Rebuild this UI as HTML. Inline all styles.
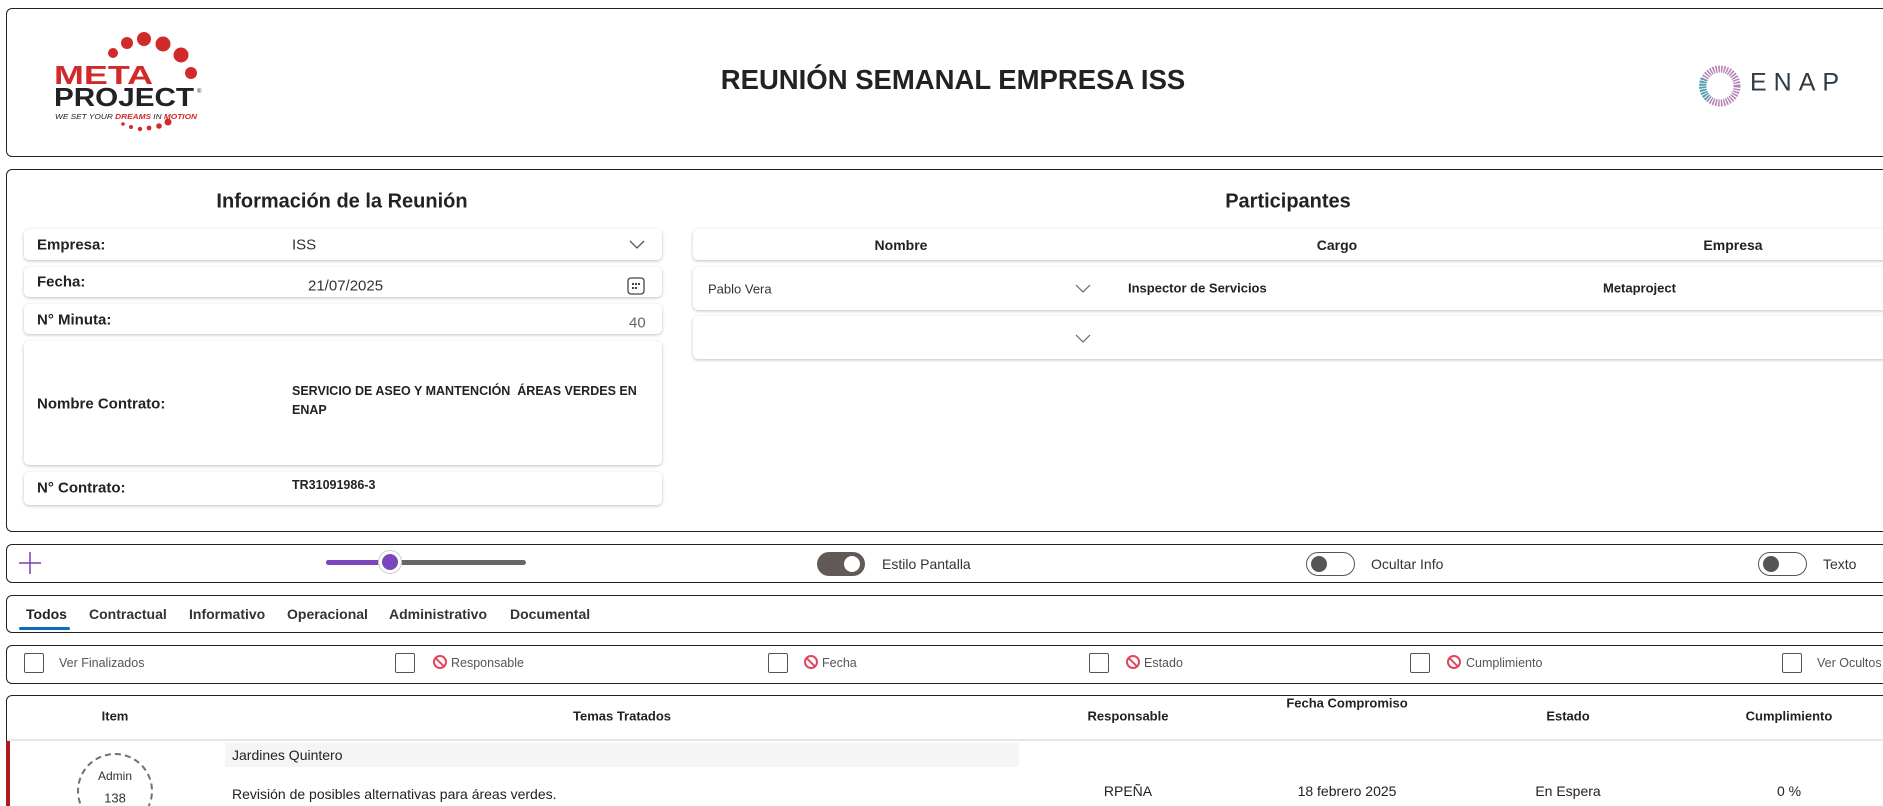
<!DOCTYPE html>
<html><head><meta charset="utf-8"><style>
*{box-sizing:border-box;margin:0;padding:0}
html,body{width:1883px;height:806px;overflow:hidden}
body{background:#fff;font-family:"Liberation Sans",Arial,sans-serif;color:#222;position:relative}
.a{position:absolute}
.box{position:absolute;left:6px;width:1900px;border:1.5px solid #222;border-radius:6px;background:#fff}
.card{position:absolute;background:#fff;border-radius:5px;box-shadow:0 1px 3px rgba(0,0,0,.25)}
.lbl{position:absolute;font-weight:bold;font-size:15px;color:#222;white-space:nowrap}
.t{position:absolute;white-space:nowrap}
.c{transform:translate(-50%,-50%)}
.m{transform:translateY(-50%)}
.cb{position:absolute;width:20px;height:20px;border:1.5px solid #555;border-radius:2px;top:653px}
.ban{position:absolute;top:655px;width:14px;height:14px;border:2px solid #e0455d;border-radius:50%}
.ban:after{content:"";position:absolute;left:4px;top:-1px;width:2px;height:13px;background:#e0455d;transform:rotate(-45deg)}
.ft{position:absolute;top:663px;transform:translateY(-50%);font-size:12.5px;color:#555;white-space:nowrap}
.tab{position:absolute;top:614px;transform:translateY(-50%);font-size:14px;font-weight:bold;color:#333}
.h{position:absolute;font-size:14px;font-weight:bold;transform:translate(-50%,-50%);white-space:nowrap}
</style></head><body>
<!-- header -->
<div class="box" style="top:8px;height:149px"></div>
<svg class="a" style="left:0;top:0" width="220" height="140" viewBox="0 0 220 140">
<g fill="#d12a2a"><circle cx="113" cy="53" r="5"/><circle cx="127" cy="43" r="6"/><circle cx="144" cy="39" r="7"/><circle cx="163" cy="44" r="7.5"/><circle cx="181" cy="55" r="7.5"/><circle cx="191" cy="73" r="6"/>
<circle cx="123" cy="124" r="1.8"/><circle cx="131" cy="127" r="2"/><circle cx="140" cy="129" r="2.2"/><circle cx="149" cy="128" r="2.4"/><circle cx="159" cy="126" r="2.8"/><circle cx="168" cy="122" r="3.5"/></g>
<text x="54" y="84" font-family="Liberation Sans" font-size="26" font-weight="bold" fill="#d12a2a" textLength="99" lengthAdjust="spacingAndGlyphs">META</text>
<text x="54" y="106" font-family="Liberation Sans" font-size="26" font-weight="900" fill="#222" textLength="140" lengthAdjust="spacingAndGlyphs">PROJECT</text>
<text x="197" y="93" font-size="6" fill="#222">®</text>
<text x="55" y="119" font-family="Liberation Sans" font-size="7" font-style="italic" fill="#222" textLength="142" lengthAdjust="spacingAndGlyphs">WE SET YOUR <tspan fill="#d12a2a" font-weight="bold">DREAMS</tspan> IN <tspan fill="#d12a2a" font-weight="bold">MOTION</tspan></text>
</svg>
<div class="t c" style="left:953px;top:80px;font-size:27.5px;font-weight:bold;color:#222">REUNIÓN SEMANAL EMPRESA ISS</div>
<svg class="a" style="left:1695px;top:61px" width="50" height="50" viewBox="0 0 50 50"><circle cx="25" cy="25" r="17" fill="none" stroke="#b77fb5" stroke-width="7" stroke-dasharray="1.5 1.2"/><path d="M9 18 A17 17 0 0 0 14 38" fill="none" stroke="#3fa7b5" stroke-width="7" stroke-dasharray="1.5 1.2"/></svg>
<div class="t m" style="left:1750px;top:83px;font-size:25px;letter-spacing:7px;color:#2f3a45">ENAP</div>

<!-- info -->
<div class="box" style="top:169px;height:363px"></div>
<div class="t c" style="left:342px;top:202px;font-size:20px;font-weight:bold">Información de la Reunión</div>
<div class="card" style="left:24px;top:229px;width:638px;height:31px"></div>
<div class="lbl m" style="left:37px;top:245px">Empresa:</div>
<div class="t m" style="left:292px;top:245px;font-size:15px;color:#333">ISS</div>
<svg class="a" style="left:629px;top:240px" width="16" height="10"><path d="M1 1 L8 8 L15 1" fill="none" stroke="#555" stroke-width="1.3"/></svg>
<div class="card" style="left:24px;top:267px;width:638px;height:30px"></div>
<div class="lbl m" style="left:37px;top:282px">Fecha:</div>
<div class="t m" style="left:308px;top:286px;font-size:15px;color:#333">21/07/2025</div>
<svg class="a" style="left:627px;top:277px" width="18" height="18"><rect x="1" y="1" width="16" height="16" rx="3" fill="none" stroke="#444" stroke-width="1.3"/><g fill="#444"><rect x="5" y="6" width="2" height="2"/><rect x="8" y="6" width="2" height="2"/><rect x="11" y="6" width="2" height="2"/><rect x="5" y="10" width="2" height="2"/><rect x="8" y="10" width="2" height="2"/></g></svg>
<div class="card" style="left:24px;top:304px;width:638px;height:30px"></div>
<div class="lbl m" style="left:37px;top:320px">N° Minuta:</div>
<div class="t m" style="left:629px;top:323px;font-size:15px;color:#666">40</div>
<div class="card" style="left:24px;top:341px;width:638px;height:124px"></div>
<div class="lbl m" style="left:37px;top:404px">Nombre Contrato:</div>
<div class="a" style="left:292px;top:382px;width:370px;font-size:12.5px;font-weight:bold;line-height:19px">SERVICIO DE ASEO Y MANTENCIÓN &nbsp;ÁREAS VERDES EN ENAP</div>
<div class="card" style="left:24px;top:472px;width:638px;height:33px"></div>
<div class="lbl m" style="left:37px;top:488px">N° Contrato:</div>
<div class="t m" style="left:292px;top:485px;font-size:12.5px;font-weight:bold">TR31091986-3</div>

<!-- participants -->
<div class="t c" style="left:1288px;top:202px;font-size:20px;font-weight:bold">Participantes</div>
<div class="card" style="left:693px;top:229px;width:1200px;height:31px"></div>
<div class="h" style="left:901px;top:245px">Nombre</div>
<div class="h" style="left:1337px;top:245px">Cargo</div>
<div class="h" style="left:1733px;top:245px">Empresa</div>
<div class="card" style="left:693px;top:267px;width:1200px;height:43px"></div>
<div class="t m" style="left:708px;top:289px;font-size:13px;color:#333">Pablo Vera</div>
<svg class="a" style="left:1075px;top:284px" width="16" height="10"><path d="M1 1 L8 8 L15 1" fill="none" stroke="#666" stroke-width="1.2"/></svg>
<div class="t m" style="left:1128px;top:288px;font-size:13px;font-weight:bold">Inspector de Servicios</div>
<div class="t m" style="left:1603px;top:288px;font-size:13px;font-weight:bold">Metaproject</div>
<div class="card" style="left:693px;top:316px;width:1200px;height:43px"></div>
<svg class="a" style="left:1075px;top:334px" width="16" height="10"><path d="M1 1 L8 8 L15 1" fill="none" stroke="#666" stroke-width="1.2"/></svg>

<!-- toolbar -->
<div class="box" style="top:544px;height:39px"></div>
<svg class="a" style="left:18px;top:551px" width="24" height="24"><path d="M12 1V23M1 12H23" stroke="#7b3fb0" stroke-width="1.5"/></svg>
<div class="a" style="left:326px;top:560px;width:200px;height:5px;background:#666;border-radius:3px"></div>
<div class="a" style="left:326px;top:560px;width:64px;height:5px;background:#7b46bb;border-radius:3px"></div>
<div class="a" style="left:378px;top:550px;width:24px;height:24px;border-radius:50%;background:#fff;border:1px solid #ccc"></div>
<div class="a" style="left:382px;top:554px;width:16px;height:16px;border-radius:50%;background:#7b46bb"></div>
<div class="a" style="left:817px;top:552px;width:48px;height:24px;border-radius:12px;background:#635a58"></div>
<div class="a" style="left:844px;top:556px;width:16px;height:16px;border-radius:50%;background:#fff"></div>
<div class="t m" style="left:882px;top:564px;font-size:14px;color:#333">Estilo Pantalla</div>
<div class="a" style="left:1306px;top:552px;width:49px;height:24px;border-radius:12px;border:1.2px solid #555"></div>
<div class="a" style="left:1311px;top:556px;width:16px;height:16px;border-radius:50%;background:#555"></div>
<div class="t m" style="left:1371px;top:564px;font-size:14px;color:#333">Ocultar Info</div>
<div class="a" style="left:1758px;top:552px;width:49px;height:24px;border-radius:12px;border:1.2px solid #555"></div>
<div class="a" style="left:1763px;top:556px;width:16px;height:16px;border-radius:50%;background:#555"></div>
<div class="t m" style="left:1823px;top:564px;font-size:14px;color:#333">Texto</div>

<!-- tabs -->
<div class="box" style="top:595px;height:38px"></div>
<div class="tab" style="left:26px;color:#222">Todos</div>
<div class="a" style="left:19px;top:627px;width:51px;height:3px;background:#0f6cbd;border-radius:2px"></div>
<div class="tab" style="left:89px">Contractual</div>
<div class="tab" style="left:189px">Informativo</div>
<div class="tab" style="left:287px">Operacional</div>
<div class="tab" style="left:389px">Administrativo</div>
<div class="tab" style="left:510px">Documental</div>

<!-- filters -->
<div class="box" style="top:645px;height:39px"></div>
<div class="cb" style="left:24px"></div><div class="ft" style="left:59px">Ver Finalizados</div>
<div class="cb" style="left:395px"></div><div class="ban" style="left:433px"></div><div class="ft" style="left:451px">Responsable</div>
<div class="cb" style="left:768px"></div><div class="ban" style="left:804px"></div><div class="ft" style="left:822px">Fecha</div>
<div class="cb" style="left:1089px"></div><div class="ban" style="left:1126px"></div><div class="ft" style="left:1144px">Estado</div>
<div class="cb" style="left:1410px"></div><div class="ban" style="left:1447px"></div><div class="ft" style="left:1466px">Cumplimiento</div>
<div class="cb" style="left:1782px"></div><div class="ft" style="left:1817px">Ver Ocultos</div>

<!-- table -->
<div class="a" style="left:0;top:0;width:1883px;height:806px;overflow:hidden">
<div class="box" style="top:695px;height:111px;border-bottom:none;border-radius:6px 6px 0 0"></div>
<div class="a" style="left:7px;top:739px;width:1876px;height:2px;background:#e6e6e6"></div>
<div class="h" style="left:115px;top:716px;font-size:13px">Item</div>
<div class="h" style="left:622px;top:716px;font-size:13px">Temas Tratados</div>
<div class="h" style="left:1128px;top:716px;font-size:13px">Responsable</div>
<div class="h" style="left:1347px;top:703px;font-size:13px">Fecha Compromiso</div>
<div class="h" style="left:1568px;top:716px;font-size:13px">Estado</div>
<div class="h" style="left:1789px;top:716px;font-size:13px">Cumplimiento</div>
<div class="a" style="left:6px;top:741px;width:4px;height:65px;background:#b01c1c"></div>
<div class="a" style="left:225px;top:743px;width:794px;height:24px;background:#f5f5f5"></div>
<div class="t m" style="left:232px;top:755px;font-size:14px;color:#222">Jardines Quintero</div>
<div class="a" style="left:77px;top:753px;width:76px;height:53px;overflow:hidden"><div style="width:76px;height:76px;border-radius:50%;border:2px dashed #6b7378"></div></div>
<div class="t c" style="left:115px;top:776px;font-size:12px;color:#333">Admin</div>
<div class="t c" style="left:115px;top:798px;font-size:13px;color:#333">138</div>
<div class="t m" style="left:232px;top:794px;font-size:14px;color:#222">Revisión de posibles alternativas para áreas verdes.</div>
<div class="t c" style="left:1128px;top:791px;font-size:14px">RPEÑA</div>
<div class="t c" style="left:1347px;top:791px;font-size:14px">18 febrero 2025</div>
<div class="t c" style="left:1568px;top:791px;font-size:14px">En Espera</div>
<div class="t c" style="left:1789px;top:791px;font-size:14px">0 %</div>
</div>
</body></html>
